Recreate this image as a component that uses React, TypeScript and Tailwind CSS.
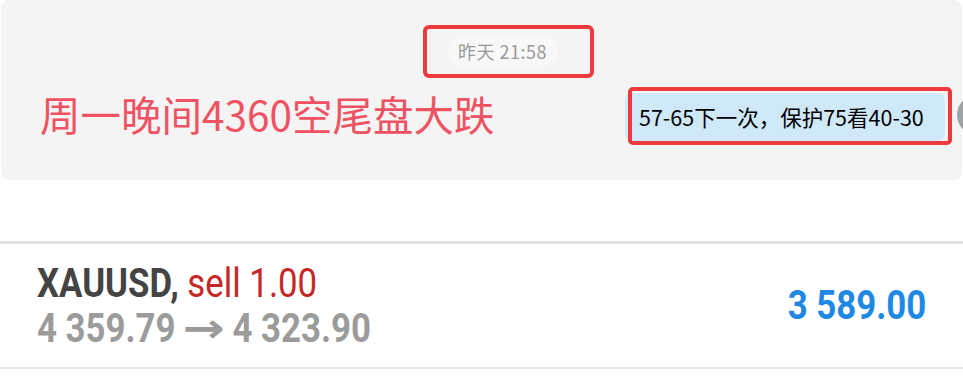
export default function App() {
  const cjk = { fontFamily: '"Noto Sans CJK SC", "Noto Sans", sans-serif' };
  const cond = { fontFamily: 'Roboto, "Liberation Sans", sans-serif' };

  return (
    <div className="w-[963px] h-[382px] bg-white overflow-hidden">
      {/* chat panel */}
      <div className="mx-[1px] h-[180px] bg-[#f4f4f4] rounded-[8px] relative" style={cjk}>
        <div className="pt-[25px] pl-[422px]">
          <div className="w-[171px] h-[53px] border-4 border-[#ee3a3c] rounded-[6px] flex items-center pl-[20px]">
            <span className="bg-[#f8f8f8] rounded-full px-[11px] py-[2px] text-[18px] tracking-[0.5px] text-[#9a9a9a]">昨天 21:58</span>
          </div>
        </div>

        <div className="flex items-center mt-[9px]">
          <div className="pl-[39px] text-[40.5px] leading-[48px] text-[#ef5262]">周一晚间4360空尾盘大跌</div>

          <div className="ml-auto mr-[17px] mt-[6px] relative">
            <div className="bg-[#cfe9fb] rounded-[8px] h-[48px] w-[320px] pl-[14px] flex items-center text-[21.5px] text-black">
              57-65下一次，保护75看40-30
            </div>
            <div className="absolute left-[3px] -top-[6px] w-[324px] h-[58px] border-4 border-[#ee3a3c] rounded-[5px]" />
          </div>
          <div className="absolute right-[-35px] top-[95px] w-[40px] h-[40px] rounded-full bg-[#9ea3a8]" />
        </div>
      </div>

      {/* trade row */}
      <div className="mt-[61px] h-[3px] bg-[#e3e3e3]" />
      <div className="flex items-center h-[123px] pl-[37px] pr-[37px]" style={cond}>
        <div className="flex flex-col origin-left scale-x-[0.87]">
          <div className="text-[40px] leading-[45px] whitespace-nowrap">
            <span className="font-bold text-[#444444]">XAUUSD, </span>
            <span className="text-[#c62828]">sell 1.00</span>
          </div>
          <div className="text-[40px] leading-[45px] font-bold text-[#9b9b9b] whitespace-nowrap">
            4 359.79{' '}
            <span className="inline-block mx-[6px] scale-x-[1.45] font-['DejaVu_Sans'] font-bold">→</span>
            {' '}4 323.90
          </div>
        </div>
        <div className="ml-auto text-[40px] font-bold text-[#1e88e5] origin-right scale-x-[0.87] whitespace-nowrap">3 589.00</div>
      </div>
      <div className="h-[2px] bg-[#e6e6e6]" />
    </div>
  );
}
